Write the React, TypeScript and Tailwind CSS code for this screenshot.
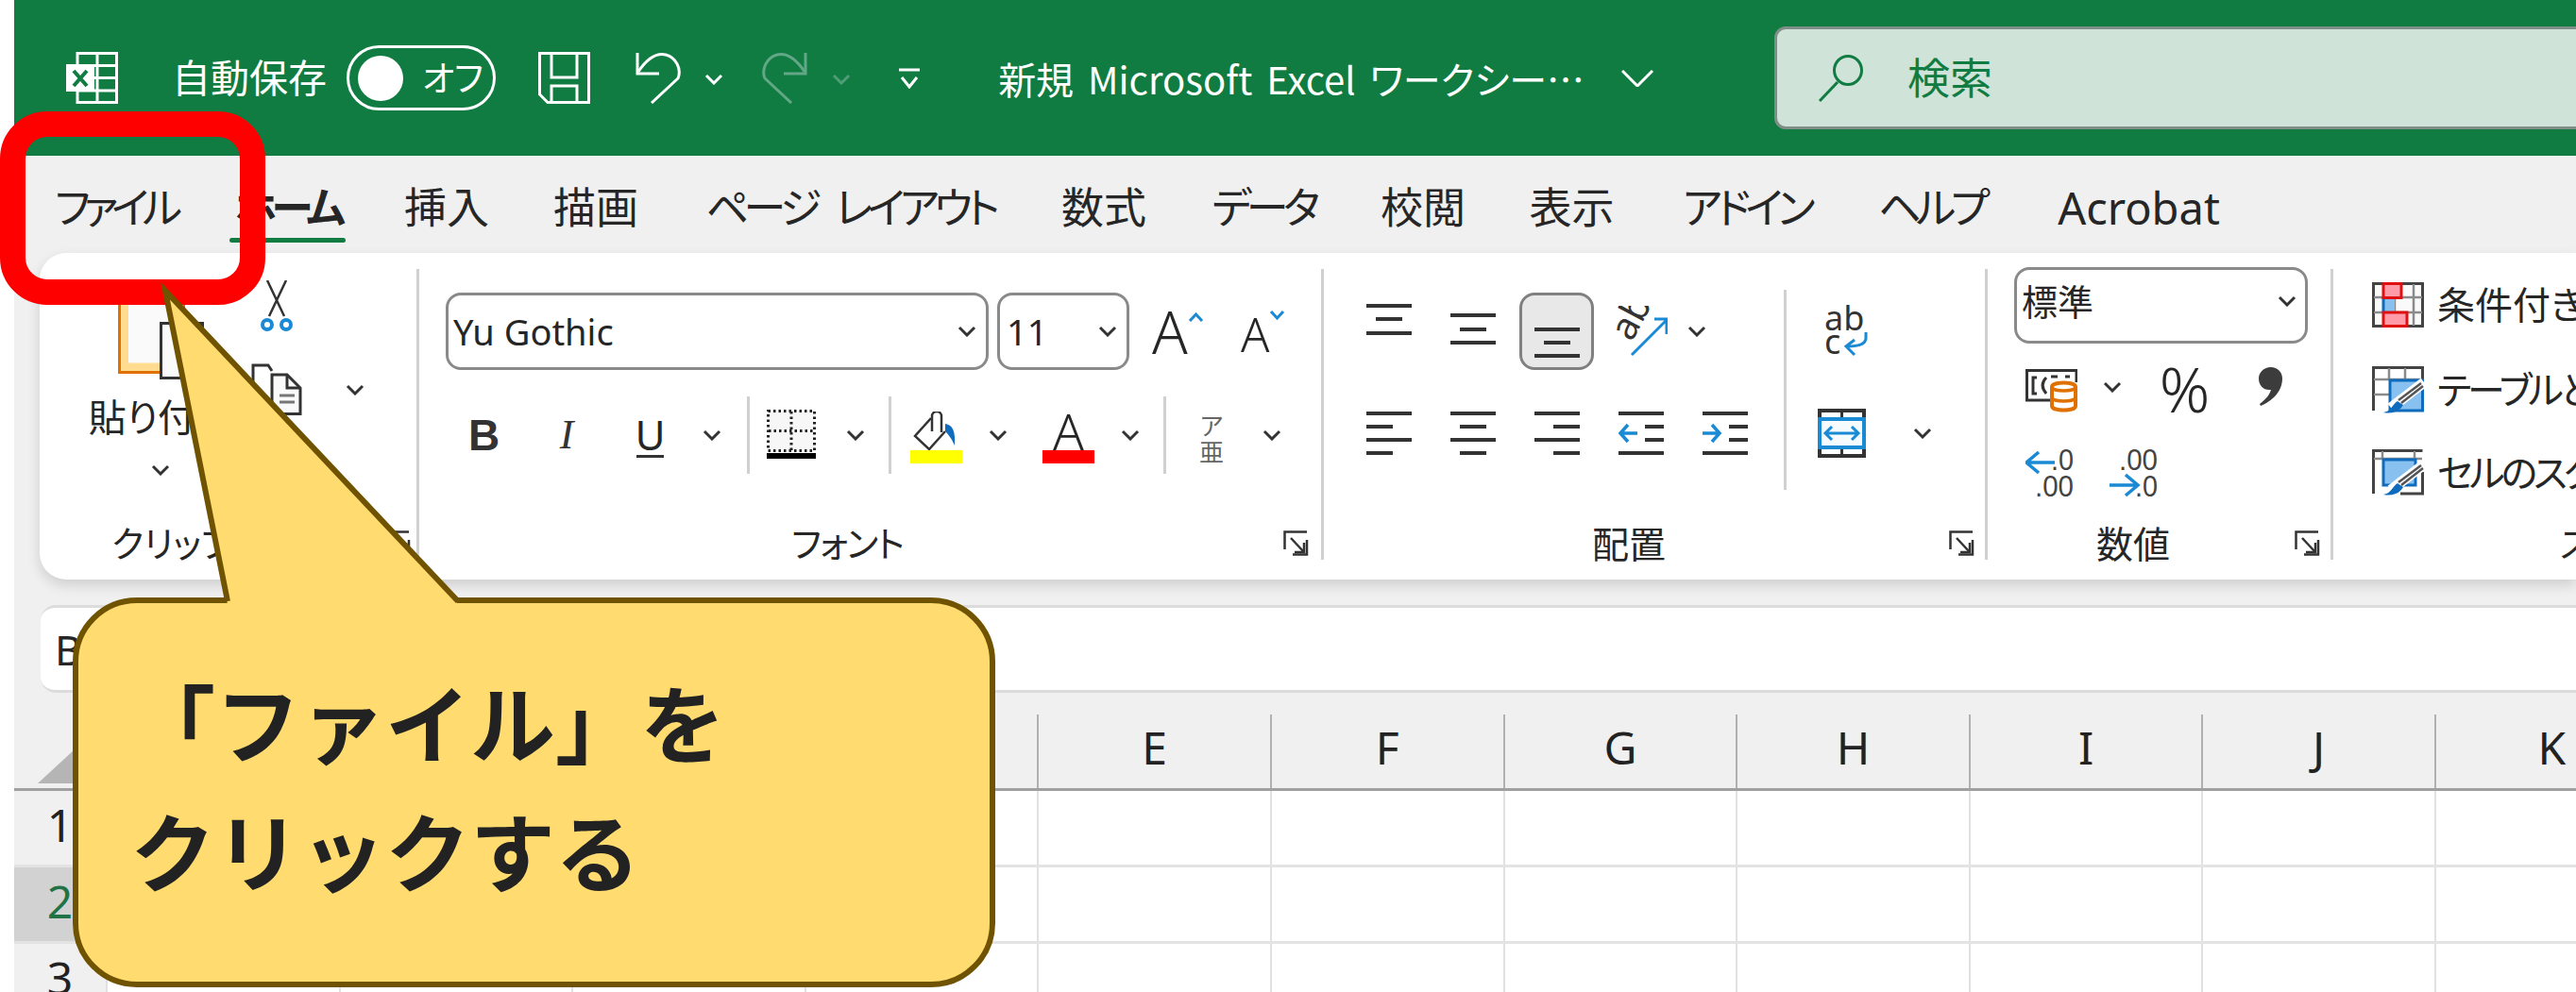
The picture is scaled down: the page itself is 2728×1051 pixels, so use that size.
import React from "react";

const kana = "tracking-[-5.5px]";

const tabs = [
  { label: "ファイル", cls: "ml-[42px] w-[130px] tracking-[-7px]" },
  { label: "ホーム", cls: `ml-[56px] w-[123px] font-bold ${kana}`, active: true },
  { label: "挿入", cls: "ml-[63px] w-[88px]" },
  { label: "描画", cls: "ml-[70px] w-[88px]" },
  { label: "ページ レイアウト", cls: `ml-[77px] w-[297px] tracking-[-5.5px] [word-spacing:14px]` },
  { label: "数式", cls: "ml-[75px] w-[90px]" },
  { label: "データ", cls: `ml-[71px] w-[106px] ${kana}` },
  { label: "校閲", cls: "ml-[72px] w-[88px]" },
  { label: "表示", cls: "ml-[69px] w-[89px]" },
  { label: "アドイン", cls: `ml-[73px] w-[135px] ${kana}` },
  { label: "ヘルプ", cls: `ml-[72px] w-[113px] ${kana}` },
  { label: "Acrobat", cls: "ml-[77px] w-[172px] text-[47px]" },
];

const columns = ["A", "B", "C", "D", "E", "F", "G", "H", "I", "J", "K"];

function Chev({ className = "text-[#333]" }: { className?: string }) {
  return (
    <svg width="20" height="12" viewBox="0 0 20 12" className={`shrink-0 ${className}`}>
      <polyline points="2,2 10,10 18,2" fill="none" stroke="currentColor" strokeWidth="3" />
    </svg>
  );
}

function Launcher() {
  return (
    <svg width="27" height="27" viewBox="0 0 27 27" fill="none" stroke="#333" strokeWidth="2.5">
      <path d="M25 1.5H1.5V20" />
      <path d="M25 10V25.5H10" />
      <path d="M8 8L22 23" />
      <path d="M22 13V23H12" />
    </svg>
  );
}

function ExcelLogo() {
  return (
    <svg width="55" height="55" viewBox="0 0 55 55" fill="none" stroke="#fff" strokeWidth="3" className="shrink-0">
      <rect x="12" y="1.5" width="41.5" height="52" />
      <path d="M33 1.5V53M12 14.5H53M12 27.5H53M12 41H53" />
      <rect x="0" y="13" width="30" height="29" fill="#fff" stroke="none" />
      <path d="M8 20L22 36M22 20L8 36" stroke="#107c41" strokeWidth="4" />
    </svg>
  );
}

function SaveIcon() {
  return (
    <svg width="55" height="55" viewBox="0 0 55 55" fill="none" stroke="#fff" strokeWidth="3" className="shrink-0">
      <path d="M1.5 1.5H53.5V53.5H10L1.5 45Z" />
      <path d="M14 2V27H41V2" />
      <path d="M14 53V36H41V53" />
    </svg>
  );
}

function UndoIcon({ className = "" }: { className?: string }) {
  return (
    <svg width="49" height="55" viewBox="0 0 49 55" fill="none" stroke="currentColor" strokeWidth="3" className={`shrink-0 ${className}`}>
      <path d="M3 1V23H26" />
      <path d="M4 21C14 6 24 1 33 3C44 6 50 18 46 28L18 54" />
    </svg>
  );
}

function QuickMenuIcon() {
  return (
    <svg width="26" height="22" viewBox="0 0 26 22" fill="none" stroke="#fff" strokeWidth="3" className="shrink-0">
      <path d="M2 2H24" />
      <polyline points="5,10 13,20 21,10" />
    </svg>
  );
}

function SearchIcon() {
  return (
    <svg width="48" height="50" viewBox="0 0 48 50" fill="none" stroke="#107c41" strokeWidth="3" className="shrink-0">
      <ellipse cx="32" cy="16.5" rx="14.5" ry="15" />
      <path d="M21 29L2 49" />
    </svg>
  );
}

function PasteIcon() {
  return (
    <svg width="91" height="97" viewBox="0 0 91 97" className="shrink-0">
      <rect x="1.5" y="1.5" width="68" height="88" fill="#ffdc8f" stroke="#e07000" strokeWidth="3" />
      <rect x="11" y="1.5" width="58" height="78" fill="#fafafa" />
      <rect x="14" y="0" width="44" height="12" fill="#808080" />
      <path d="M45.5 37.5H89.5V95.5H45.5Z" fill="#fafafa" stroke="#333" strokeWidth="3" />
      <path d="M75 38V52H89" fill="none" stroke="#333" strokeWidth="2" />
    </svg>
  );
}

function ScissorsIcon() {
  return (
    <svg width="34" height="54" viewBox="0 0 34 54" fill="none" className="shrink-0">
      <path d="M7 0L25 38M27 0L9 38" stroke="#333" strokeWidth="2.5" />
      <circle cx="7" cy="47" r="5" stroke="#1a8ad4" strokeWidth="4" />
      <circle cx="27" cy="47" r="5" stroke="#1a8ad4" strokeWidth="4" />
    </svg>
  );
}

function CopyIcon() {
  return (
    <svg width="54" height="55" viewBox="0 0 54 55" fill="none" stroke="#333" strokeWidth="3" className="shrink-0">
      <path d="M2 42V2H18L22 8" />
      <path d="M22 12H38L52 26V53.5H22Z" fill="#fafafa" />
      <path d="M38 12V26H52" />
      <path d="M30 34H46M30 41H46" stroke="#777" />
    </svg>
  );
}

function BorderIcon() {
  return (
    <svg width="52" height="52" viewBox="0 0 52 52" fill="none" className="shrink-0">
      <rect x="1.5" y="1.5" width="49" height="42" fill="#f7f7f7" stroke="#222" strokeWidth="3" strokeDasharray="2.5 3" />
      <path d="M26 2V44M2 22.5H50" stroke="#222" strokeWidth="3" strokeDasharray="2.5 3" />
      <rect x="0" y="46" width="52" height="6" fill="#000" />
    </svg>
  );
}

function FillIcon() {
  return (
    <svg width="55" height="41" viewBox="0 0 55 41" fill="none" className="shrink-0">
      <path d="M22 7L5 26L20 40L37 21" stroke="#333" strokeWidth="2.5" />
      <path d="M23 21V5A5 5 0 0 1 33 5V22" stroke="#333" strokeWidth="2.5" />
      <path d="M37 13C45 14 48 21 47 36C44 29 41 25 37 21Z" fill="#0f6cbd" />
    </svg>
  );
}

function AlignLines({ ys, kind }: { ys: number[]; kind: "left" | "center" | "right" | "top" }) {
  return (
    <svg width="48" height="82" viewBox="0 0 48 82" stroke="#333" strokeWidth="4" className="shrink-0">
      {ys.map((y, i) => {
        const short = i % 2 === 1;
        let x1 = 0;
        let x2 = 48;
        if (short && (kind === "top" || kind === "center")) {
          x1 = 10;
          x2 = 38;
        }
        if (short && kind === "left") x2 = 28;
        if (short && kind === "right") x1 = 20;
        return <line key={y} x1={x1} x2={x2} y1={y} y2={y} />;
      })}
    </svg>
  );
}

function IndentIcon({ dir }: { dir: "dec" | "inc" }) {
  return (
    <svg width="48" height="82" viewBox="0 0 48 82" fill="none" className="shrink-0">
      <path d="M0 18H48M28 32H48M28 46H48M0 60H48" stroke="#333" strokeWidth="4" />
      {dir === "dec" ? (
        <path d="M20 39H3M10 30L2 39L10 48" stroke="#1a8ad4" strokeWidth="3.5" />
      ) : (
        <path d="M0 39H17M10 30L18 39L10 48" stroke="#1a8ad4" strokeWidth="3.5" />
      )}
    </svg>
  );
}

function OrientIcon() {
  return (
    <svg width="57" height="54" viewBox="0 0 57 54" fill="none" className="shrink-0">
      <text x="0" y="0" transform="translate(19 39) rotate(-62)" fontSize="40" fill="#333" fontFamily="Noto Sans, sans-serif">
        ab
      </text>
      <path d="M19 52L56 15M43 14H56V30" stroke="#1a8ad4" strokeWidth="3" />
    </svg>
  );
}

function WrapIcon() {
  return (
    <svg width="51" height="56" viewBox="0 0 51 56" fill="none" className="shrink-0">
      <text x="0" y="27" fontSize="36" fill="#333" fontFamily="Noto Sans, sans-serif">
        ab
      </text>
      <text x="0" y="52" fontSize="36" fill="#333" fontFamily="Noto Sans, sans-serif">
        c
      </text>
      <path d="M44 29V35Q44 44 24 44M32 37L23 44L32 53" stroke="#1a8ad4" strokeWidth="3" />
    </svg>
  );
}

function MergeIcon() {
  return (
    <svg width="51" height="52" viewBox="0 0 51 52" fill="none" className="shrink-0">
      <path d="M2 2H49V50H2Z" stroke="#333" strokeWidth="4" />
      <path d="M25.5 2V11M25.5 41V50" stroke="#333" strokeWidth="3" />
      <rect x="2" y="11" width="47" height="30" fill="#f5fbff" stroke="#1a8ad4" strokeWidth="4" />
      <path d="M8 26H43M15 19L8 26L15 33M36 19L43 26L36 33" stroke="#1a8ad4" strokeWidth="3" />
    </svg>
  );
}

function CurrencyIcon() {
  return (
    <svg width="55" height="46" viewBox="0 0 55 46" fill="none" className="shrink-0">
      <path d="M28 33H1.5V1.5H54V14" stroke="#333" strokeWidth="3" />
      <path d="M12 9H8V26H12M22 9C17 14 17 20 22 26M27 8H34M42 8H47" stroke="#333" strokeWidth="3" />
      <path d="M28 19C28 13 53 13 53 19V39C53 45 28 45 28 39Z" fill="#fff" stroke="#e07000" strokeWidth="4" />
      <path d="M28 20C32 24 49 24 53 20M28 31C32 35 49 35 53 31" stroke="#e07000" strokeWidth="3.5" />
    </svg>
  );
}

function CommaIcon() {
  return (
    <svg width="25" height="43" viewBox="0 0 25 43" className="shrink-0">
      <path d="M12.5 0C20 0 25 5 25 12C25 26 14 36 2 41L1 39C8 34 12 28 13 24C5 25 0 19 0 12C0 5 6 0 12.5 0Z" fill="#3c3c3c" />
    </svg>
  );
}

function DecimalLess() {
  return (
    <svg width="52" height="52" viewBox="0 0 52 52" fill="none" className="shrink-0">
      <text x="27" y="23" fontSize="32" fill="#444" fontFamily="Liberation Sans, sans-serif" textLength="24" lengthAdjust="spacingAndGlyphs">
        .0
      </text>
      <text x="10" y="51" fontSize="32" fill="#444" fontFamily="Liberation Sans, sans-serif" textLength="41" lengthAdjust="spacingAndGlyphs">
        .00
      </text>
      <path d="M31 15H2M14 4L1 15L14 26" stroke="#1a8ad4" strokeWidth="3.5" />
    </svg>
  );
}

function DecimalMore() {
  return (
    <svg width="52" height="52" viewBox="0 0 52 52" fill="none" className="shrink-0">
      <text x="10" y="23" fontSize="32" fill="#444" fontFamily="Liberation Sans, sans-serif" textLength="41" lengthAdjust="spacingAndGlyphs">
        .00
      </text>
      <text x="27" y="51" fontSize="32" fill="#444" fontFamily="Liberation Sans, sans-serif" textLength="24" lengthAdjust="spacingAndGlyphs">
        .0
      </text>
      <path d="M0 39H29M17 28L30 39L17 50" stroke="#1a8ad4" strokeWidth="3.5" />
    </svg>
  );
}

function CondFormatIcon() {
  return (
    <svg width="55" height="48" viewBox="0 0 55 48" fill="none" className="shrink-0">
      <rect x="1.5" y="1.5" width="52" height="45" fill="#fafafa" stroke="#444" strokeWidth="3" />
      <path d="M44 2V46M24 2V46M2 16H53M2 32H53" stroke="#8a8a8a" strokeWidth="2.5" />
      <rect x="12" y="16" width="12" height="16" fill="#88c0f0" />
      <path d="M12 16V32" stroke="#0f6cbd" strokeWidth="3" />
      <rect x="12" y="1.5" width="19" height="15" fill="#ff9aa8" stroke="#e01010" strokeWidth="3" />
      <rect x="12" y="32" width="25" height="14.5" fill="#ff9aa8" stroke="#e01010" strokeWidth="3" />
    </svg>
  );
}

function Brush({ y = 0 }: { y?: number }) {
  return (
    <g transform={`translate(0 ${y})`}>
      <path d="M55 17L20 44" stroke="#fff" strokeWidth="11" />
      <path d="M52 18L28 36M54 21L31 39" stroke="#555" strokeWidth="2.5" />
      <path d="M12 49C20 48 22 40 27 37L33 41C30 47 22 51 12 49Z" fill="#0f6cbd" />
    </g>
  );
}

function TableStyleIcon() {
  return (
    <svg width="55" height="51" viewBox="0 0 55 51" fill="none" className="shrink-0">
      <path d="M1.5 47V1.5H53.5V14" stroke="#444" strokeWidth="3" />
      <path d="M18 2V14M35 2V14M2 14H53M2 30H18" stroke="#8a8a8a" strokeWidth="2.5" />
      <rect x="19" y="15" width="34.5" height="32" fill="#88c0f0" stroke="#0f6cbd" strokeWidth="3" />
      <Brush />
    </svg>
  );
}

function CellStyleIcon() {
  return (
    <svg width="55" height="51" viewBox="0 0 55 51" fill="none" className="shrink-0">
      <path d="M1.5 47V1.5H53.5M53.5 24V47H30" stroke="#444" strokeWidth="3" />
      <path d="M2 10H53M11 2V10M45 2V10" stroke="#8a8a8a" strokeWidth="2.5" />
      <rect x="12" y="11" width="34" height="27" fill="#88c0f0" stroke="#0f6cbd" strokeWidth="3" />
      <Brush y={-1} />
    </svg>
  );
}

function GroupSep() {
  return <div className="w-[3px] h-[82px] shrink-0 bg-[#d0d0d0]" />;
}

export default function App() {
  return (
    <div className="relative flex w-[2728px] h-[1051px] overflow-hidden bg-white text-[#262626] font-['Noto_Sans','Noto_Sans_CJK_JP',sans-serif] [font-feature-settings:'palt']">
      <div className="w-[15px] shrink-0 bg-white" />
      <div className="flex flex-col w-[2713px] shrink-0 bg-[#f0f0f0]">
        {/* title bar */}
        <div className="flex items-center h-[165px] shrink-0 bg-[#107c41] text-white">
          <div className="ml-[55px] shrink-0">
            <ExcelLogo />
          </div>
          <span className="ml-[59px] flex justify-center w-[160px] shrink-0 text-[41px] leading-none whitespace-nowrap">自動保存</span>
          <div className="ml-[23px] flex items-center w-[158px] h-[69px] shrink-0 rounded-full border-[3px] border-white">
            <div className="ml-[9px] w-[48px] h-[48px] shrink-0 rounded-full bg-white" />
            <span className="ml-[20px] text-[37px] leading-none whitespace-nowrap">オフ</span>
          </div>
          <div className="ml-[45px] shrink-0">
            <SaveIcon />
          </div>
          <div className="ml-[47px] shrink-0">
            <UndoIcon />
          </div>
          <div className="ml-[25px] mt-[2px] shrink-0">
            <Chev className="text-white" />
          </div>
          <div className="ml-[41px] shrink-0 -scale-x-100 text-[#62a886]">
            <UndoIcon />
          </div>
          <div className="ml-[25px] mt-[2px] shrink-0">
            <Chev className="text-[#4f9c77]" />
          </div>
          <div className="ml-[49px] shrink-0">
            <QuickMenuIcon />
          </div>
          <span className="ml-[89px] flex justify-center w-[605px] shrink-0 text-[40px] leading-none whitespace-nowrap font-['Noto_Sans_CJK_JP',sans-serif] [word-spacing:6px]">新規 Microsoft Excel ワークシー…</span>
          <svg width="34" height="18" viewBox="0 0 34 18" fill="none" stroke="#fff" strokeWidth="3" className="ml-[47px] shrink-0">
            <polyline points="1,1 17,17 33,1" />
          </svg>
          <div className="ml-[128px] flex items-center w-[900px] h-[109px] shrink-0 rounded-[12px] bg-[#cfe3d8] border-[3px] border-[#7f8f87] text-[#107c41]">
            <div className="ml-[43px] shrink-0">
              <SearchIcon />
            </div>
            <span className="ml-[47px] text-[45px] leading-none whitespace-nowrap">検索</span>
          </div>
        </div>

        {/* tabs */}
        <div className="flex h-[103px] shrink-0 pt-[30px] text-[45px] leading-[50px]">
          {tabs.map((t) => (
            <div key={t.label} className={`flex flex-col items-center shrink-0 ${t.cls}`}>
              <span className="flex justify-center w-full whitespace-pre">{t.label}</span>
              {t.active && <div className="mt-[7px] w-full h-[5px] rounded-full bg-[#107c41]" />}
            </div>
          ))}
        </div>

        {/* ribbon */}
        <div className="flex ml-[27px] h-[346px] shrink-0 rounded-l-[28px] bg-white shadow-[0_6px_14px_rgba(0,0,0,0.14)] pt-[17px] text-[40px] leading-none">
          {/* clipboard */}
          <div className="flex flex-col w-[402px] h-[308px] shrink-0 border-r-[3px] border-[#d0d0d0]">
            <div className="flex">
              <div className="flex flex-col items-center ml-[52px] w-[152px] shrink-0">
                <div className="mt-[20px]">
                  <PasteIcon />
                </div>
                <span className="mt-[20px] text-[40px] whitespace-nowrap">貼り付け</span>
                <div className="mt-[30px]">
                  <Chev />
                </div>
              </div>
              <div className="flex flex-col ml-[20px]">
                <div className="ml-[10px] mt-[12px]">
                  <ScissorsIcon />
                </div>
                <div className="flex items-center mt-[34px]">
                  <CopyIcon />
                  <div className="ml-[46px]">
                    <Chev />
                  </div>
                </div>
              </div>
            </div>
            <div className="flex items-center mt-auto h-[36px] pl-[76px] pr-[6px]">
              <span className="text-[38px] whitespace-nowrap">クリップボード</span>
              <div className="ml-auto">
                <Launcher />
              </div>
            </div>
          </div>

          {/* font */}
          <div className="flex flex-col w-[958px] h-[308px] shrink-0 border-r-[3px] border-[#d0d0d0]">
            <div className="flex items-center mt-[25px] pl-[28px] h-[82px]">
              <div className="flex items-center justify-between w-[575px] h-[82px] shrink-0 rounded-[16px] border-[3px] border-[#8a8a8a] pl-[5px] pr-[10px] text-[38px] font-['Noto_Sans',sans-serif]">
                <span>Yu Gothic</span>
                <Chev />
              </div>
              <div className="ml-[9px] flex items-center justify-between w-[140px] h-[82px] shrink-0 rounded-[16px] border-[3px] border-[#8a8a8a] pl-[7px] pr-[10px] text-[38px]">
                <span>11</span>
                <Chev />
              </div>
              <div className="ml-[24px] flex items-start w-[50px] h-[48px]">
                <span className="text-[62px] leading-[48px] font-light">A</span>
                <svg width="17" height="10" viewBox="0 0 17 10" fill="none" stroke="#1a8ad4" strokeWidth="3" className="mt-[4px] shrink-0">
                  <polyline points="2,9 8.5,2 15,9" />
                </svg>
              </div>
              <div className="ml-[44px] flex items-start w-[46px] h-[38px] mt-[6px]">
                <span className="text-[50px] leading-[38px] font-light">A</span>
                <svg width="17" height="10" viewBox="0 0 17 10" fill="none" stroke="#1a8ad4" strokeWidth="3" className="-mt-[6px] shrink-0">
                  <polyline points="2,1 8.5,8 15,1" />
                </svg>
              </div>
            </div>
            <div className="flex items-center mt-[28px] h-[82px] pl-[56px]">
              <span className="flex justify-center w-[25px] text-[46px] font-bold font-['Liberation_Sans',sans-serif] text-[#333]">B</span>
              <span className="flex justify-center ml-[64px] w-[22px] text-[44px] italic font-['Liberation_Serif',serif] text-[#333]">I</span>
              <span className="flex flex-col items-center ml-[63px] w-[29px] text-[44px]">
                U
                <span className="w-[29px] h-[3px] bg-[#333]" />
              </span>
              <div className="ml-[41px]">
                <Chev />
              </div>
              <div className="ml-[27px]">
                <GroupSep />
              </div>
              <div className="ml-[18px] mt-[-2px]">
                <BorderIcon />
              </div>
              <div className="ml-[32px]">
                <Chev />
              </div>
              <div className="ml-[25px]">
                <GroupSep />
              </div>
              <div className="flex flex-col ml-[20px] mt-[5px]">
                <FillIcon />
                <div className="w-[55px] h-[14px] bg-[#ffff00]" />
              </div>
              <div className="ml-[28px]">
                <Chev />
              </div>
              <div className="flex flex-col items-center ml-[37px] w-[55px] mt-[5px]">
                <span className="h-[41px] text-[54px] leading-[41px] font-light">A</span>
                <div className="w-[55px] h-[14px] bg-[#ff0000]" />
              </div>
              <div className="ml-[28px]">
                <Chev />
              </div>
              <div className="ml-[25px]">
                <GroupSep />
              </div>
              <div className="flex flex-col items-center ml-[34px] w-[28px] mt-[8px] text-[26px] leading-[28px] text-[#666]">
                <span>ア</span>
                <span>亜</span>
              </div>
              <div className="ml-[40px]">
                <Chev />
              </div>
            </div>
            <div className="flex items-center mt-auto h-[36px] pl-[394px] pr-[13px]">
              <span className="text-[38px] tracking-[-1.5px] whitespace-nowrap">フォント</span>
              <div className="ml-auto">
                <Launcher />
              </div>
            </div>
          </div>

          {/* alignment */}
          <div className="flex flex-col w-[703px] h-[308px] shrink-0 border-r-[3px] border-[#d0d0d0]">
            <div className="flex h-[234px]">
              <div className="flex flex-col w-[490px] shrink-0 pt-[25px] pl-[45px]">
                <div className="flex items-center h-[82px]">
                  <AlignLines kind="top" ys={[14, 28, 43]} />
                  <div className="ml-[41px]">
                    <AlignLines kind="top" ys={[24, 39, 53]} />
                  </div>
                  <div className="ml-[25px] flex justify-center w-[79px] h-[82px] shrink-0 rounded-[16px] bg-[#e8e8e8] border-[3px] border-[#808080]">
                    <div className="-mt-[3px]">
                      <AlignLines kind="top" ys={[39, 53, 67]} />
                    </div>
                  </div>
                  <div className="ml-[21px]">
                    <OrientIcon />
                  </div>
                  <div className="ml-[21px]">
                    <Chev />
                  </div>
                </div>
                <div className="flex items-center h-[82px] mt-[28px]">
                  <AlignLines kind="left" ys={[18, 32, 46, 60]} />
                  <div className="ml-[41px]">
                    <AlignLines kind="center" ys={[18, 32, 46, 60]} />
                  </div>
                  <div className="ml-[41px]">
                    <AlignLines kind="right" ys={[18, 32, 46, 60]} />
                  </div>
                  <div className="ml-[41px]">
                    <IndentIcon dir="dec" />
                  </div>
                  <div className="ml-[41px]">
                    <IndentIcon dir="inc" />
                  </div>
                </div>
              </div>
              <div className="w-[3px] h-[212px] mt-[22px] shrink-0 -ml-[3px] bg-[#d0d0d0]" />
              <div className="flex flex-col pt-[38px]">
                <div className="ml-[40px]">
                  <WrapIcon />
                </div>
                <div className="flex items-center ml-[33px] mt-[54px]">
                  <MergeIcon />
                  <div className="ml-[50px]">
                    <Chev />
                  </div>
                </div>
              </div>
            </div>
            <div className="flex items-center mt-auto h-[36px] pl-[284px] pr-[11px]">
              <span className="text-[39px] whitespace-nowrap">配置</span>
              <div className="ml-auto">
                <Launcher />
              </div>
            </div>
          </div>

          {/* number */}
          <div className="flex flex-col w-[366px] h-[308px] shrink-0 border-r-[3px] border-[#d0d0d0]">
            <div className="flex items-center justify-between ml-[28px] -mt-[2px] w-[311px] h-[81px] shrink-0 rounded-[16px] border-[3px] border-[#8a8a8a] pl-[5px] pr-[9px] pb-[10px] text-[38px]">
              <span>標準</span>
              <Chev />
            </div>
            <div className="flex items-center ml-[40px] mt-[24px] h-[52px]">
              <CurrencyIcon />
              <div className="ml-[27px] -mt-[8px]">
                <Chev />
              </div>
              <span className="flex justify-center ml-[41px] w-[51px] text-[66px] leading-[52px] font-light -mt-[6px]">%</span>
              <div className="ml-[53px] -mt-[8px]">
                <CommaIcon />
              </div>
            </div>
            <div className="flex items-center ml-[40px] mt-[35px] h-[52px]">
              <DecimalLess />
              <div className="ml-[37px]">
                <DecimalMore />
              </div>
            </div>
            <div className="flex items-center mt-auto h-[36px] pl-[115px] pr-[11px]">
              <span className="text-[39px] whitespace-nowrap">数値</span>
              <div className="ml-auto">
                <Launcher />
              </div>
            </div>
          </div>

          {/* styles, cut off by the window */}
          <div className="flex flex-col w-[260px] h-[308px] shrink-0 overflow-hidden">
            <div className="flex items-center ml-[41px] mt-[14px] h-[48px]">
              <CondFormatIcon />
              <span className="ml-[14px] whitespace-nowrap">条件付き書式</span>
            </div>
            <div className="flex items-center ml-[41px] mt-[41px] h-[50px]">
              <TableStyleIcon />
              <span className="ml-[14px] tracking-[-4px] whitespace-nowrap">テーブルとして書式設定</span>
            </div>
            <div className="flex items-center ml-[41px] mt-[38px] h-[50px]">
              <CellStyleIcon />
              <span className="ml-[14px] tracking-[-4px] whitespace-nowrap">セルのスタイル</span>
            </div>
            <div className="flex items-center mt-auto h-[36px] pl-[240px]">
              <span className="text-[38px] whitespace-nowrap">スタイル</span>
            </div>
          </div>
        </div>

        <div className="h-[27px] shrink-0" />

        {/* formula bar */}
        <div className="flex items-center ml-[28px] h-[93px] shrink-0 rounded-l-[16px] bg-white border-y-[3px] border-[#dcdcdc] pl-[15px] text-[44px]">
          B2
        </div>

        {/* column headers */}
        <div className="flex h-[104px] shrink-0 border-b-[3px] border-[#a0a0a0] pt-[23px]">
          <div className="flex items-end w-[97px] shrink-0">
            <svg width="65" height="60" viewBox="0 0 65 60" className="ml-[25px] mb-[5px]">
              <polygon points="0,60 65,60 65,0" fill="#b5b5b5" />
            </svg>
          </div>
          {columns.map((c) => (
            <div key={c} className="flex items-center justify-center w-[246.6px] shrink-0 border-l-2 border-[#b0b0b0] text-[48px] leading-none text-[#222] pb-[8px]">
              {c}
            </div>
          ))}
        </div>

        {/* rows */}
        {[1, 2, 3].map((n) => (
          <div key={n} className="flex h-[81px] shrink-0 border-b-[3px] border-[#e3e3e3] bg-white">
            <div className={n === 2 ? "flex items-center justify-center w-[97px] shrink-0 bg-[#d2d2d2] text-[#217346] text-[48px] leading-none pb-[6px]" : "flex items-center justify-center w-[97px] shrink-0 bg-[#f0f0f0] text-[#222] text-[48px] leading-none pb-[6px]"}>
              {n}
            </div>
            {columns.map((c) => (
              <div key={c} className="w-[246.6px] shrink-0 border-l-2 border-[#e1e1e1]" />
            ))}
          </div>
        ))}
      </div>

      {/* red highlight round the file tab */}
      <div className="absolute left-0 top-[118px] w-[281px] h-[205px] rounded-[50px] border-[27px] border-[#ff0000]" />

      {/* callout */}
      <div className="absolute left-[77px] top-[633px] w-[977px] h-[413px] rounded-[68px] border-[6px] border-[#705300] bg-[#ffdb70] pl-[55px] pt-[56px] text-[90px] leading-[136px] font-bold text-[#222] font-['Noto_Sans_CJK_JP',sans-serif] [font-feature-settings:normal]">
        <div className="whitespace-nowrap">「ファイル」を</div>
        <div className="whitespace-nowrap">クリックする</div>
      </div>
      <svg width="330" height="345" viewBox="165 300 330 345" className="absolute left-[165px] top-[300px]">
        <polygon points="241,640 175,308 485,640" fill="#ffdb70" />
        <polyline points="241,637 175,308 485,637" fill="none" stroke="#705300" strokeWidth="6" />
      </svg>
    </div>
  );
}
